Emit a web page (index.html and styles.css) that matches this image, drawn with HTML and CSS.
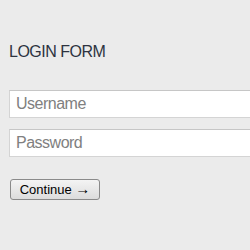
FILE: index.html
```html
<!DOCTYPE html>
<html>
<head>
<meta charset="utf-8">
<link rel="stylesheet" href="styles.css">
</head>
<body>
<form class="login">
  <h1 class="title">LOGIN FORM</h1>
  <input class="field" type="text" placeholder="Username">
  <input class="field" type="password" placeholder="Password">
  <button class="btn" type="button">Continue <span class="arrow">→</span></button>
</form>
</body>
</html>
```
FILE: styles.css
```css
html, body {
  margin: 0;
  padding: 0;
  background: #ebebeb;
  overflow: hidden;
}
.login {
  display: flex;
  flex-direction: column;
  align-items: flex-start;
  padding: 43px 0 0 9px;
  width: 232px;
}
.title {
  margin: 0;
  font-family: "Liberation Sans", Arial, sans-serif;
  font-weight: normal;
  font-size: 16px;
  letter-spacing: -0.5px;
  line-height: 18px;
  color: #2d3340;
}
.field {
  box-sizing: border-box;
  width: 241px;
  height: 28px;
  margin: 0;
  padding: 0 6px;
  border: 1px solid #d4d4d4;
  border-top-color: #c6c6c6;
  border-right: none;
  background: #fff;
  font-family: "Liberation Sans", Arial, sans-serif;
  font-size: 16px;
  letter-spacing: -0.5px;
  color: #333;
  outline: none;
}
.field::placeholder {
  color: #808080;
}
.field + .field {
  margin-top: 11px;
}
.title + .field {
  margin-top: 29px;
}
.btn {
  margin: 22px 0 0 1px;
  box-sizing: border-box;
  width: 90px;
  height: 21px;
  padding: 0;
  border: 1px solid #8a8a8a;
  border-radius: 3px;
  background: linear-gradient(#f4f4f4, #dcdcdc);
  font-family: "Liberation Sans", Arial, sans-serif;
  font-size: 13px;
  line-height: 17px;
  color: #000;
}
.arrow {
  font-family: "Noto Sans", sans-serif;
  font-size: 15px;
  line-height: 1;
}
```
